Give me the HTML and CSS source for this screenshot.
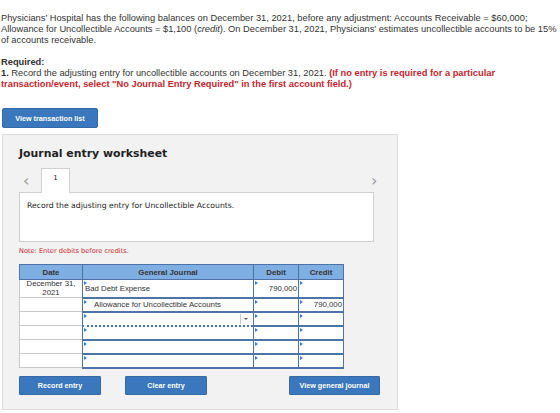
FILE: index.html
```html
<!DOCTYPE html>
<html lang="en">
<head>
<meta charset="utf-8">
<title>Journal entry worksheet</title>
<link rel="stylesheet" href="styles.css">
</head>
<body>
<div class="page">
  <p class="intro">Physicians’ Hospital has the following balances on December 31, 2021, before any adjustment: Accounts Receivable = $60,000; Allowance for Uncollectible Accounts = $1,100 (<em>credit</em>). On December 31, 2021, Physicians’ estimates uncollectible accounts to be 15% of accounts receivable.</p>

  <p class="req-label">Required:</p>
  <p class="req-text"><b>1.</b> Record the adjusting entry for uncollectible accounts on December 31, 2021. <span class="warn">(If no entry is required for a particular transaction/event, select "No Journal Entry Required" in the first account field.)</span></p>

  <button class="btn btn-list" type="button">View transaction list</button>

  <section class="panel">
    <h2 class="panel-title">Journal entry worksheet</h2>

    <div class="tabs">
      <span class="chev chev-left">&lsaquo;</span>
      <span class="tab">1</span>
      <span class="tabs-fill"></span>
      <span class="chev chev-right">&rsaquo;</span>
    </div>

    <div class="prompt">Record the adjusting entry for Uncollectible Accounts.</div>

    <p class="note">Note: Enter debits before credits.</p>

    <table class="journal">
      <thead>
        <tr>
          <th class="c-date">Date</th>
          <th class="c-acct">General Journal</th>
          <th class="c-num">Debit</th>
          <th class="c-num">Credit</th>
        </tr>
      </thead>
      <tbody>
        <tr class="r-first">
          <td class="date">December 31,<br>2021</td>
          <td class="cell acct">Bad Debt Expense</td>
          <td class="cell num">790,000</td>
          <td class="cell num"></td>
        </tr>
        <tr>
          <td class="date"></td>
          <td class="cell acct indent">Allowance for Uncollectible Accounts</td>
          <td class="cell num"></td>
          <td class="cell num">790,000</td>
        </tr>
        <tr>
          <td class="date"></td>
          <td class="cell acct active"><span class="drop"></span></td>
          <td class="cell num"></td>
          <td class="cell num"></td>
        </tr>
        <tr>
          <td class="date"></td>
          <td class="cell acct"></td>
          <td class="cell num"></td>
          <td class="cell num"></td>
        </tr>
        <tr>
          <td class="date"></td>
          <td class="cell acct"></td>
          <td class="cell num"></td>
          <td class="cell num"></td>
        </tr>
        <tr>
          <td class="date"></td>
          <td class="cell acct"></td>
          <td class="cell num"></td>
          <td class="cell num"></td>
        </tr>
      </tbody>
    </table>

    <div class="actions">
      <button class="btn btn-action" type="button">Record entry</button>
      <button class="btn btn-action btn-clear" type="button">Clear entry</button>
      <span class="actions-fill"></span>
      <button class="btn btn-action btn-journal" type="button">View general journal</button>
    </div>
  </section>
</div>
</body>
</html>
```

FILE: styles.css
```css
html, body {
  margin: 0;
  padding: 0;
  background: #ffffff;
}

.page {
  padding: 13px 0 0 1px;
  font-family: "Liberation Sans", Arial, sans-serif;
  color: #333333;
}

p {
  margin: 0;
}

.intro {
  font-size: 9.3px;
  line-height: 11px;
  width: 559px;
}

.req-label {
  margin-top: 11px;
  font-size: 9.3px;
  line-height: 11px;
  font-weight: bold;
}

.req-text {
  font-size: 9.3px;
  line-height: 11px;
  width: 500px;
}

.warn {
  color: #c4262e;
  font-weight: bold;
}

.btn {
  display: block;
  border: 1px solid #3569a8;
  border-radius: 2px;
  background: #3b77bc;
  color: #ffffff;
  font-family: "Liberation Sans", Arial, sans-serif;
  font-weight: bold;
  font-size: 7.2px;
  padding: 0;
  height: 20px;
  cursor: pointer;
}

.btn-list {
  margin: 18px 0 0 1px;
  width: 96px;
}

.panel {
  margin: 6px 0 0 1px;
  width: 378px;
  height: 274px;
  background: #f2f2f2;
  border: 1px solid #dcdcdc;
  padding: 0 0 0 16px;
  box-sizing: content-box;
  font-family: "DejaVu Sans", Verdana, sans-serif;
}

.panel-title {
  margin: 12px 0 0 0;
  font-size: 10.9px;
  line-height: 14px;
  font-weight: bold;
  color: #222222;
}

.tabs {
  display: flex;
  align-items: flex-end;
  margin-top: 6px;
  width: 362px;
  height: 25px;
}

.chev {
  font-family: "DejaVu Sans", sans-serif;
  font-size: 16px;
  line-height: 16px;
  color: #9a9a9a;
  align-self: center;
  padding-top: 2px;
}

.chev-left {
  width: 22px;
  padding-left: 4px;
  box-sizing: border-box;
}

.tab {
  width: 29px;
  height: 25px;
  box-sizing: border-box;
  background: #ffffff;
  border: 1px solid #cfcfcf;
  border-bottom: none;
  font-size: 7px;
  text-align: center;
  line-height: 18px;
  color: #222222;
  position: relative;
  top: 1px;
}

.tabs-fill {
  flex: 1;
}

.chev-right {
  width: 10px;
}

.prompt {
  width: 355px;
  height: 50px;
  box-sizing: border-box;
  background: #ffffff;
  border: 1px solid #cfcfcf;
  font-size: 7.7px;
  line-height: 10px;
  padding: 8px 0 0 7px;
  color: #222222;
}

.note {
  margin-top: 5px;
  font-size: 6.6px;
  line-height: 8px;
  color: #c4262e;
}

.journal {
  margin-top: 9px;
  border-collapse: collapse;
  font-family: "Liberation Sans", Arial, sans-serif;
  font-size: 7.8px;
  color: #333333;
  table-layout: fixed;
  width: 320px;
}

.journal th {
  background: #7eaee2;
  border: 1px solid #4e73a6;
  height: 14px;
  padding: 0;
  font-weight: bold;
  color: #333333;
  line-height: 13px;
}

.c-date { width: 62px; }
.c-acct { width: 170px; }
.c-num { width: 44px; }

.journal td {
  padding: 0;
  background: #ffffff;
  height: 12px;
  line-height: 9px;
}

.journal td.date {
  border: 1px solid #c8c8c8;
  border-right: 1px solid #4e73a6;
  text-align: center;
  vertical-align: top;
  line-height: 8.6px;
}

.journal td.cell {
  border: 1px solid #4e73a6;
  border-bottom-width: 2px;
  position: relative;
  vertical-align: middle;
}

/* blue corner flag marking an editable field */
.journal td.cell::before {
  content: "";
  position: absolute;
  left: 1px;
  top: 1px;
  border-top: 2px solid transparent;
  border-bottom: 2px solid transparent;
  border-left: 3px solid #3a7bd5;
}

.r-first td {
  height: 16px;
}

.journal td.acct {
  padding-left: 2px;
}

.journal td.indent {
  padding-left: 11px;
}

.journal td.num {
  text-align: right;
  padding-right: 1px;
}

.journal td.active {
  border: 1px dotted #4e73a6;
  border-bottom: 2px dotted #4e73a6;
}

.drop {
  position: absolute;
  right: 3px;
  top: 1px;
  width: 10px;
  height: 10px;
  border-left: 1px solid #c8c8c8;
  box-sizing: border-box;
}

.drop::after {
  content: "";
  position: absolute;
  left: 3px;
  top: 4px;
  border-left: 2.5px solid transparent;
  border-right: 2.5px solid transparent;
  border-top: 2.5px solid #555555;
}

.actions {
  display: flex;
  margin-top: 7px;
  width: 361px;
}

.btn-action {
  width: 82px;
  height: 19px;
  border-radius: 1px;
}

.btn-clear {
  margin-left: 24px;
}

.actions-fill {
  flex: 1;
}

.btn-journal {
  width: 91px;
}
```
